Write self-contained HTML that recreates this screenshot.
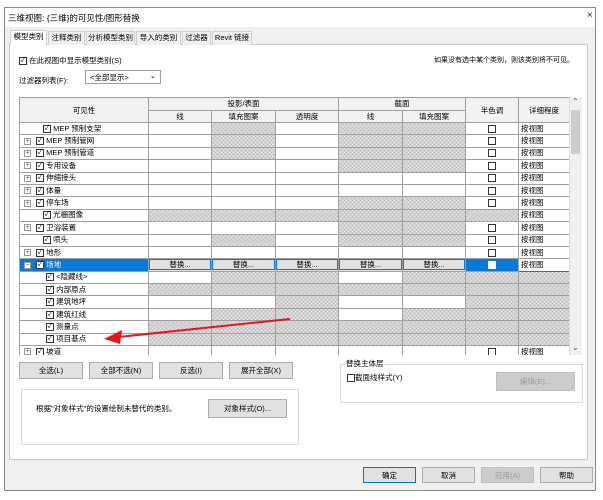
<!DOCTYPE html>
<html><head><meta charset="utf-8"><style>
*{box-sizing:border-box;margin:0;padding:0}
body{width:603px;height:500px;background:#fff;font-family:"Liberation Sans","Noto Sans CJK SC",sans-serif;font-size:7.5px;color:#000;position:relative;overflow:hidden}
.a{position:absolute;white-space:nowrap}
.dlg{left:4px;top:7px;width:592px;height:484px;border:1px solid #8a8a8a;background:#f0f0f0}
.tb{left:5px;top:8px;width:590px;height:19px;background:#fff}
.tab{top:31px;height:14px;border:1px solid #d0d0d0;border-bottom:none;background:#f0f0f0;text-align:center;line-height:12px;font-size:7.5px;overflow:hidden}
.panel{left:9px;top:44px;width:579px;height:416px;border:1px solid #c8c8c8;background:#fff}
.cb{width:8px;height:8px;border:1px solid #333;background:#fff;display:inline-block;font-size:7px;line-height:6px;text-align:center;vertical-align:middle}
.btn{border:1px solid #adadad;background:#e1e1e1;text-align:center;line-height:15px;white-space:nowrap}
table{border-collapse:collapse;table-layout:fixed;position:absolute;left:19px;top:97px}
td{border:1px solid #a0a0a0;height:12.4px;padding:0 0 0 2px;white-space:nowrap;overflow:hidden;font-size:7.5px;line-height:10px;background:#fff;vertical-align:middle}
th{border:1px solid #a0a0a0;font-weight:normal;background:#f2f2f2;font-size:7.5px;height:12.5px}
td.h{background-color:#d6d6d6;background-image:repeating-conic-gradient(#bdbdbd 0 25%,#e6e6e6 0 50%);background-size:4px 4px}
td.c{text-align:center;padding:0}
.n{padding-left:14px}
.sel td{background:#0a78d7;color:#fff}
.sel td.r{background:#e1e1e1;color:#000;padding:0;text-align:center}
.sel td.r span{display:block;border:1px solid #0a78d7;height:11px;line-height:9px}
.ex{display:inline-block;width:7px;height:7px;border:1px solid #999;font-size:7px;line-height:5px;text-align:center;margin-right:2px;color:#555;vertical-align:middle}
.ne{display:inline-block;width:9px}
</style></head><body>
<div class="a dlg"></div>
<div class="a tb"></div>
<div class="a" style="left:8px;top:12px;font-size:8.5px">三维视图: {三维}的可见性/图形替换</div>
<div class="a" style="left:587px;top:10px;font-size:10px;color:#333">×</div>
<div class="a panel"></div>
<div class="a tab" style="left:10px;top:30px;width:37px;height:15px;background:#fff">模型类别</div>
<div class="a tab" style="left:48px;width:37px">注释类别</div>
<div class="a tab" style="left:86px;width:49px">分析模型类别</div>
<div class="a tab" style="left:136px;width:45px">导入的类别</div>
<div class="a tab" style="left:182px;width:29px">过滤器</div>
<div class="a tab" style="left:212px;width:40px">Revit 链接</div>
<div class="a" style="left:19px;top:55px"><span class="cb">✓</span> 在此视图中显示模型类别(S)</div>
<div class="a" style="left:434px;top:55px;font-size:7px">如果没有选中某个类别，则该类别将不可见。</div>
<div class="a" style="left:19px;top:75px">过滤器列表(F):</div>
<div class="a" style="left:85px;top:70px;width:76px;height:14px;border:1px solid #a0a0a0;background:#fff;padding:1px 4px">&lt;全部显示&gt;<span style="position:absolute;right:4px;top:0">⌄</span></div>
<table>
<colgroup><col style="width:129px"><col style="width:63px"><col style="width:64px"><col style="width:63px"><col style="width:64px"><col style="width:63px"><col style="width:53px"><col style="width:51px"></colgroup>
<tr><th rowspan="2">可见性</th><th colspan="3">投影/表面</th><th colspan="2">截面</th><th rowspan="2">半色调</th><th rowspan="2">详细程度</th></tr>
<tr><th>线</th><th>填充图案</th><th>透明度</th><th>线</th><th>填充图案</th></tr>
<tr><td class="n"><span class="ne"></span><span class="cb">✓</span> MEP 预制支架</td><td></td><td class="h"></td><td></td><td class="h"></td><td class="h"></td><td class="c"><span class="cb"></span></td><td>按视图</td></tr>
<tr><td style="padding-left:4px"><span class="ex">+</span><span class="cb" style="margin-left:3px">✓</span> MEP 预制管网</td><td></td><td class="h"></td><td></td><td class="h"></td><td class="h"></td><td class="c"><span class="cb"></span></td><td>按视图</td></tr>
<tr><td style="padding-left:4px"><span class="ex">+</span><span class="cb" style="margin-left:3px">✓</span> MEP 预制管道</td><td></td><td class="h"></td><td></td><td class="h"></td><td class="h"></td><td class="c"><span class="cb"></span></td><td>按视图</td></tr>
<tr><td style="padding-left:4px"><span class="ex">+</span><span class="cb" style="margin-left:3px">✓</span> 专用设备</td><td></td><td></td><td></td><td class="h"></td><td class="h"></td><td class="c"><span class="cb"></span></td><td>按视图</td></tr>
<tr><td style="padding-left:4px"><span class="ex">+</span><span class="cb" style="margin-left:3px">✓</span> 伸缩接头</td><td></td><td></td><td></td><td></td><td></td><td class="c"><span class="cb"></span></td><td>按视图</td></tr>
<tr><td style="padding-left:4px"><span class="ex">+</span><span class="cb" style="margin-left:3px">✓</span> 体量</td><td></td><td></td><td></td><td></td><td></td><td class="c"><span class="cb"></span></td><td>按视图</td></tr>
<tr><td style="padding-left:4px"><span class="ex">+</span><span class="cb" style="margin-left:3px">✓</span> 停车场</td><td></td><td></td><td></td><td class="h"></td><td class="h"></td><td class="c"><span class="cb"></span></td><td>按视图</td></tr>
<tr><td class="n"><span class="ne"></span><span class="cb">✓</span> 光栅图像</td><td class="h"></td><td class="h"></td><td class="h"></td><td class="h"></td><td class="h"></td><td class="h"></td><td>按视图</td></tr>
<tr><td style="padding-left:4px"><span class="ex">+</span><span class="cb" style="margin-left:3px">✓</span> 卫浴装置</td><td></td><td></td><td></td><td class="h"></td><td class="h"></td><td class="c"><span class="cb"></span></td><td>按视图</td></tr>
<tr><td class="n"><span class="ne"></span><span class="cb">✓</span> 喷头</td><td></td><td class="h"></td><td></td><td class="h"></td><td class="h"></td><td class="c"><span class="cb"></span></td><td>按视图</td></tr>
<tr><td style="padding-left:4px"><span class="ex">+</span><span class="cb" style="margin-left:3px">✓</span> 地形</td><td></td><td></td><td></td><td></td><td></td><td class="c"><span class="cb"></span></td><td>按视图</td></tr>
<tr class="sel"><td style="padding-left:4px"><span class="ex" style="background:#fff">−</span><span class="cb" style="margin-left:3px;color:#000">✓</span> 场地</td><td class="r"><span>替换...</span></td><td class="r"><span>替换...</span></td><td class="r"><span>替换...</span></td><td class="r"><span>替换...</span></td><td class="r"><span>替换...</span></td><td class="c"><span class="cb" style="border-color:#fff"></span></td><td style="background:#fff;color:#000;border:1px solid #0a78d7">按视图</td></tr>
<tr><td style="padding-left:26px"><span class="cb">✓</span> &lt;隐藏线&gt;</td><td></td><td class="h"></td><td class="h"></td><td></td><td class="h"></td><td class="h"></td><td class="h"></td></tr>
<tr><td style="padding-left:26px"><span class="cb">✓</span> 内部原点</td><td class="h"></td><td class="h"></td><td class="h"></td><td class="h"></td><td class="h"></td><td class="h"></td><td class="h"></td></tr>
<tr><td style="padding-left:26px"><span class="cb">✓</span> 建筑地坪</td><td></td><td></td><td class="h"></td><td></td><td></td><td class="h"></td><td class="h"></td></tr>
<tr><td style="padding-left:26px"><span class="cb">✓</span> 建筑红线</td><td></td><td class="h"></td><td class="h"></td><td></td><td class="h"></td><td class="h"></td><td class="h"></td></tr>
<tr><td style="padding-left:26px"><span class="cb">✓</span> 测量点</td><td class="h"></td><td class="h"></td><td class="h"></td><td class="h"></td><td class="h"></td><td class="h"></td><td class="h"></td></tr>
<tr><td style="padding-left:26px"><span class="cb">✓</span> 项目基点</td><td class="h"></td><td class="h"></td><td class="h"></td><td class="h"></td><td class="h"></td><td class="h"></td><td class="h"></td></tr>
<tr><td style="padding-left:4px"><span class="ex">+</span><span class="cb" style="margin-left:3px">✓</span> 坡道</td><td></td><td></td><td></td><td></td><td></td><td class="c"><span class="cb"></span></td><td>按视图</td></tr>
</table>
<div class="a" style="left:18px;top:355px;width:566px;height:4px;background:#fff"></div>
<div class="a" style="left:569px;top:97px;width:13px;height:258px;background:#f0f0f0;border-left:1px solid #ddd"></div>
<div class="a" style="left:571px;top:110px;width:9px;height:44px;background:#cdcdcd"></div>
<div class="a" style="left:572px;top:97px;font-size:8px;color:#555">⌃</div>
<div class="a" style="left:572px;top:343px;font-size:8px;color:#555">⌄</div>
<svg class="a" style="left:0;top:0" width="603" height="500"><line x1="290" y1="319" x2="118" y2="337" stroke="#e8141e" stroke-width="2"/><polygon points="104,339 122,330 120,344" fill="#e8141e"/></svg>
<div class="a btn" style="left:19px;top:362px;width:64px;height:17px">全选(L)</div>
<div class="a btn" style="left:89px;top:362px;width:64px;height:17px">全部不选(N)</div>
<div class="a btn" style="left:159px;top:362px;width:64px;height:17px">反选(I)</div>
<div class="a btn" style="left:229px;top:362px;width:64px;height:17px">展开全部(X)</div>
<div class="a" style="left:21px;top:389px;width:278px;height:56px;border:1px solid #dcdcdc"></div>
<div class="a" style="left:36px;top:403px">根据"对象样式"的设置绘制未替代的类别。</div>
<div class="a btn" style="left:208px;top:399px;width:79px;height:19px;line-height:17px">对象样式(O)...</div>
<div class="a" style="left:340px;top:364px;width:243px;height:39px;border:1px solid #dcdcdc"></div>
<div class="a" style="left:345px;top:358px;background:#fff;padding:0 1px">替换主体层</div>
<div class="a" style="left:347px;top:372px"><span class="cb"></span>截面线样式(Y)</div>
<div class="a btn" style="left:496px;top:372px;width:79px;height:19px;line-height:17px;color:#999;background:#ccc;border-color:#bfbfbf">编辑(E)...</div>
<div class="a btn" style="left:363px;top:467px;width:53px;height:16px;border:1px solid #0078d7">确定</div>
<div class="a btn" style="left:422px;top:467px;width:53px;height:16px">取消</div>
<div class="a btn" style="left:481px;top:467px;width:53px;height:16px;color:#999;background:#ccc;border-color:#bfbfbf">应用(A)</div>
<div class="a btn" style="left:540px;top:467px;width:53px;height:16px">帮助</div>
</body></html>
